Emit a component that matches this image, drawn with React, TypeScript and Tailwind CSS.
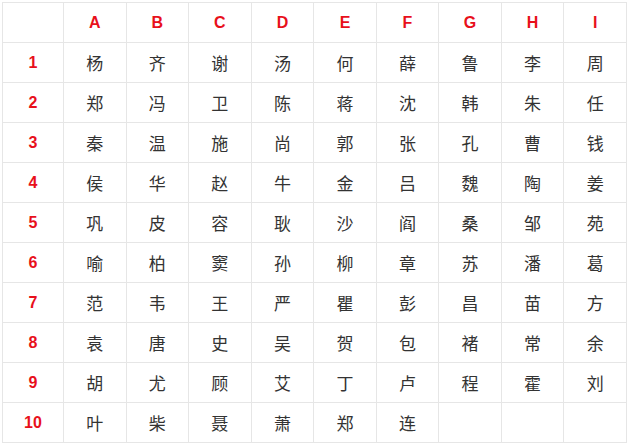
const cols = ['A', 'B', 'C', 'D', 'E', 'F', 'G', 'H', 'I'];

// 每行姓氏（第10行只有6个）
const rows: string[][] = [
  ['杨', '齐', '谢', '汤', '何', '薛', '鲁', '李', '周'],
  ['郑', '冯', '卫', '陈', '蒋', '沈', '韩', '朱', '任'],
  ['秦', '温', '施', '尚', '郭', '张', '孔', '曹', '钱'],
  ['侯', '华', '赵', '牛', '金', '吕', '魏', '陶', '姜'],
  ['巩', '皮', '容', '耿', '沙', '阎', '桑', '邹', '苑'],
  ['喻', '柏', '窦', '孙', '柳', '章', '苏', '潘', '葛'],
  ['范', '韦', '王', '严', '瞿', '彭', '昌', '苗', '方'],
  ['袁', '唐', '史', '吴', '贺', '包', '褚', '常', '余'],
  ['胡', '尤', '顾', '艾', '丁', '卢', '程', '霍', '刘'],
  ['叶', '柴', '聂', '萧', '郑', '连', '', '', ''],
];

const cell = 'border border-[#e6e6e6] h-10 p-0 text-center align-middle';
const head = `${cell} text-[16px] font-bold text-[#e8101b] font-['Liberation_Sans',Arial,sans-serif]`;
const body = `${cell} text-[17px] text-[#333333] font-['Noto_Sans_CJK_SC','Liberation_Sans',sans-serif]`;

export default function App() {
  return (
    <div className="w-[637px] h-[447px] bg-white pl-[2px] pt-[2px]">
      <table className="border-collapse table-fixed w-[625px]">
        <thead>
          <tr>
            <th className={`${head} w-[61px]`}></th>
            {cols.map((c) => (
              <th key={c} className={head}>
                {c}
              </th>
            ))}
          </tr>
        </thead>
        <tbody>
          {rows.map((r, i) => (
            <tr key={i}>
              <td className={head}>{i + 1}</td>
              {r.map((name, j) => (
                <td key={j} className={body}>
                  {name}
                </td>
              ))}
            </tr>
          ))}
        </tbody>
      </table>
    </div>
  );
}
